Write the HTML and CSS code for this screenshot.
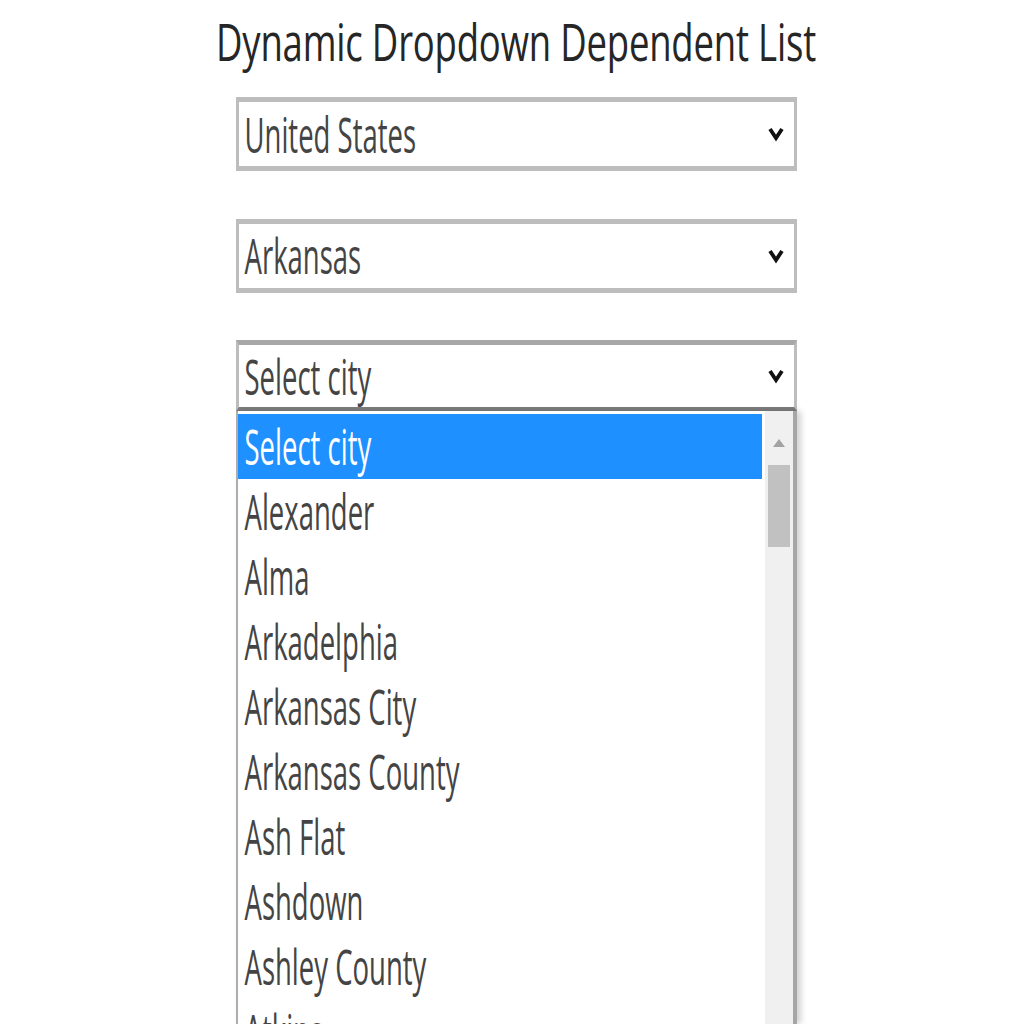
FILE: index.html
```html
<!DOCTYPE html>
<html>
<head>
<meta charset="utf-8">
<link rel="stylesheet" href="styles.css">
</head>
<body>
<div class="page">
  <h1 class="title"><span class="tx">Dynamic Dropdown Dependent List</span></h1>
  <div class="form">
    <div class="select">
      <span class="tx">United States</span>
      <svg class="chev" width="16" height="20" viewBox="0 0 16 20"><path d="M2 5 L8 14 L14 5" fill="none" stroke="#111" stroke-width="3.8"/></svg>
    </div>
    <div class="select">
      <span class="tx">Arkansas</span>
      <svg class="chev" width="16" height="20" viewBox="0 0 16 20"><path d="M2 5 L8 14 L14 5" fill="none" stroke="#111" stroke-width="3.8"/></svg>
    </div>
    <div class="select open">
      <span class="tx">Select city</span>
      <svg class="chev" width="16" height="20" viewBox="0 0 16 20"><path d="M2 5 L8 14 L14 5" fill="none" stroke="#111" stroke-width="3.8"/></svg>
    </div>
    <div class="list">
      <div class="opts">
        <div class="opt sel"><span class="tx">Select city</span></div>
        <div class="opt"><span class="tx">Alexander</span></div>
        <div class="opt"><span class="tx">Alma</span></div>
        <div class="opt"><span class="tx">Arkadelphia</span></div>
        <div class="opt"><span class="tx">Arkansas City</span></div>
        <div class="opt"><span class="tx">Arkansas County</span></div>
        <div class="opt"><span class="tx">Ash Flat</span></div>
        <div class="opt"><span class="tx">Ashdown</span></div>
        <div class="opt"><span class="tx">Ashley County</span></div>
        <div class="opt"><span class="tx">Atkins</span></div>
      </div>
      <div class="scroll">
        <div class="arrow"></div>
        <div class="thumb"></div>
      </div>
    </div>
  </div>
</div>
</body>
</html>
```
FILE: styles.css
```css
html, body {
  margin: 0;
  padding: 0;
  background: #ffffff;
  overflow: hidden;
  height: 1024px;
}
body {
  font-family: "Open Sans", "Noto Sans", sans-serif;
}
.page {
  padding-left: 8px;
}
.title {
  margin: 0 0 13px 0;
  height: 84px;
  display: flex;
  align-items: center;
  justify-content: center;
  font-size: 36.5px;
  font-weight: 400;
  color: #262626;
}
.title .tx {
  display: inline-block;
  transform: scaleY(1.38);
  letter-spacing: -0.2px;
}
.form {
  width: 561px;
  margin: 0 auto;
}
.select {
  box-sizing: border-box;
  height: 74px;
  border-style: solid;
  border-color: #bdbdbd;
  border-width: 5px 3px;
  display: flex;
  align-items: center;
  justify-content: space-between;
  padding: 0 10px 0 6px;
  margin-bottom: 47.5px;
  font-size: 27.5px;
  color: #444444;
}
.tx {
  display: inline-block;
  transform: scaleY(1.78);
  white-space: nowrap;
}
.select.open {
  height: 71px;
  margin-bottom: 0;
  border-top-color: #a8a8a8;
  border-bottom: 4px solid #7d7d7d;
}
.chev {
  display: block;
}
.list {
  display: flex;
  height: 613px;
  overflow: hidden;
  border-left: 2px solid #adadad;
  border-right: 4px solid #a6a6a6;
  box-shadow: 4px 0 6px rgba(0, 0, 0, 0.18);
}
.opts {
  flex: 1;
  padding-top: 3px;
  padding-right: 3px;
}
.opt {
  height: 65px;
  display: flex;
  align-items: center;
  padding-left: 7px;
  font-size: 27.5px;
  color: #444444;
}
.opt.sel {
  background: #1e90ff;
  color: #ffffff;
}
.scroll {
  width: 28px;
  background: #f0f0f0;
  display: flex;
  flex-direction: column;
  align-items: center;
  padding-top: 28px;
}
.arrow {
  width: 0;
  height: 0;
  border-left: 6px solid transparent;
  border-right: 6px solid transparent;
  border-bottom: 8px solid #a3a3a3;
}
.thumb {
  margin-top: 18px;
  width: 22px;
  height: 82px;
  background: #c1c1c1;
}
```
